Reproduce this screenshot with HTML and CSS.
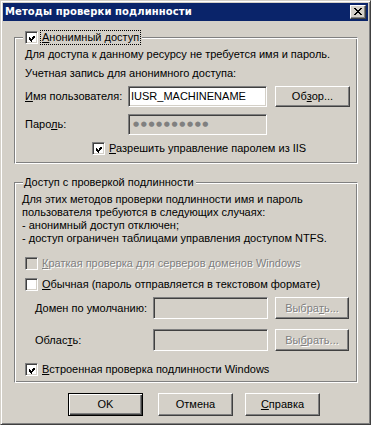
FILE: index.html
```html
<!DOCTYPE html>
<html lang="ru">
<head>
<meta charset="utf-8">
<title>Методы проверки подлинности</title>
<link rel="stylesheet" href="styles.css">
</head>
<body>
<div class="window">
  <div class="titlebar">
    <span class="title">Методы проверки подлинности</span>
    <span class="close-btn"><svg width="8" height="7" viewBox="0 0 8 7" shape-rendering="crispEdges"><path d="M0 0h2v1H0zM6 0h2v1H6zM1 1h2v1H1zM5 1h2v1H5zM2 2h4v1H2zM3 3h2v1H3zM2 4h4v1H2zM1 5h2v1H1zM5 5h2v1H5zM0 6h2v1H0zM6 6h2v1H6z" fill="#000"/></svg></span>
  </div>
  <div class="content">
    <div class="group group-anon">
      <div class="legend">
        <span class="cb"><svg class="tick" width="7" height="7" viewBox="0 0 7 7" shape-rendering="crispEdges"><path d="M6 0H7V3H6V4H5V5H4V6H3V7H2V6H1V5H0V2H1V3H2V4H3V3H4V2H5V1H6Z" fill="#000"/></svg></span>
        <span class="focus-label"><u>А</u>нонимный доступ</span>
      </div>
      <p class="text t1">Для доступа к данному ресурсу не требуется имя и пароль.</p>
      <p class="text t2">Учетная запись для анонимного доступа:</p>
      <div class="row row-user">
        <span class="lbl lbl-a"><u>И</u>мя пользователя:</span>
        <span class="field field-a">IUSR_MACHINENAME</span>
        <span class="btn btn-side">Об<u>з</u>ор...</span>
      </div>
      <div class="row row-pass">
        <span class="lbl lbl-a">Паро<u>л</u>ь:</span>
        <span class="field field-a field-disabled"><span class="dots">●●●●●●●●●●</span></span>
      </div>
      <div class="check-row check-iis">
        <span class="cb"><svg class="tick" width="7" height="7" viewBox="0 0 7 7" shape-rendering="crispEdges"><path d="M6 0H7V3H6V4H5V5H4V6H3V7H2V6H1V5H0V2H1V3H2V4H3V3H4V2H5V1H6Z" fill="#000"/></svg></span>
        <span class="cb-label"><u>Р</u>азрешить управление паролем из IIS</span>
      </div>
    </div>

    <div class="group group-auth">
      <div class="legend legend-text">Доступ с проверкой подлинности</div>
      <p class="text para">Для этих методов проверки подлинности имя и пароль<br>пользователя требуются в следующих случаях:<br>- анонимный доступ отключен;<br>- доступ ограничен таблицами управления доступом NTFS.</p>
      <div class="check-row check-digest">
        <span class="cb cb-disabled"></span>
        <span class="cb-label disabled"><u>К</u>раткая проверка для серверов доменов Windows</span>
      </div>
      <div class="check-row check-basic">
        <span class="cb"></span>
        <span class="cb-label"><u>О</u>бычная (пароль отправляется в текстовом формате)</span>
      </div>
      <div class="row row-domain">
        <span class="lbl lbl-b">Домен по умолчанию:</span>
        <span class="field field-b field-disabled"></span>
        <span class="btn btn-side btn-b disabled">Выбра<u>т</u>ь...</span>
      </div>
      <div class="row row-realm">
        <span class="lbl lbl-b">Облас<u>т</u>ь:</span>
        <span class="field field-b field-disabled"></span>
        <span class="btn btn-side btn-b disabled">Вы<u>б</u>рать...</span>
      </div>
      <div class="check-row check-win">
        <span class="cb"><svg class="tick" width="7" height="7" viewBox="0 0 7 7" shape-rendering="crispEdges"><path d="M6 0H7V3H6V4H5V5H4V6H3V7H2V6H1V5H0V2H1V3H2V4H3V3H4V2H5V1H6Z" fill="#000"/></svg></span>
        <span class="cb-label"><u>В</u>строенная проверка подлинности Windows</span>
      </div>
    </div>

    <div class="buttons">
      <span class="btn btn-main btn-default">OK</span>
      <span class="btn btn-main btn-cancel">Отмена</span>
      <span class="btn btn-main btn-help"><u>С</u>правка</span>
    </div>
  </div>
</div>
</body>
</html>
```

FILE: styles.css
```css
html, body {
  margin: 0;
  padding: 0;
  background: #d4d0c8;
}

body {
  font-family: "Liberation Sans", Arial, sans-serif;
  font-size: 11px;
  line-height: 13px;
  color: #000;
}

u {
  text-decoration: underline;
  text-underline-offset: 1px;
}

.window {
  width: 371px;
  height: 425px;
  box-sizing: border-box;
  border: 1px solid;
  border-color: #d4d0c8 #404040 #404040 #d4d0c8;
  box-shadow: inset 1px 1px #fff, inset -1px -1px #808080;
  padding: 2px;
  background: #d4d0c8;
  display: flex;
  flex-direction: column;
}

.titlebar {
  height: 18px;
  flex: none;
  background: #0a246a;
  color: #fff;
  display: flex;
  align-items: center;
  justify-content: space-between;
  padding: 0 2px;
}

.title {
  font-family: "DejaVu Sans", sans-serif;
  font-weight: bold;
  font-size: 10px;
  line-height: 18px;
  white-space: nowrap;
  letter-spacing: 0.1px;
}

.close-btn {
  width: 16px;
  height: 14px;
  box-sizing: border-box;
  background: #d4d0c8;
  border: 1px solid;
  border-color: #fff #404040 #404040 #fff;
  box-shadow: inset -1px -1px #808080;
  display: flex;
  align-items: center;
  justify-content: center;
  padding: 0 0 1px 0;
}

.close-btn svg {
  display: block;
}

.content {
  display: flex;
  flex-direction: column;
  align-items: flex-start;
  padding: 16px 10px 0 11px;
}

.group {
  width: 344px;
  box-sizing: border-box;
  border: 1px solid;
  border-color: #808080 #fff #fff #808080;
  box-shadow: inset 1px 1px #fff, inset -1px -1px #808080;
  display: flex;
  flex-direction: column;
  align-items: flex-start;
  padding: 0 6px 8px 10px;
}

.group-auth {
  margin-top: 18px;
  padding-bottom: 6px;
}

.legend {
  margin-top: -7px;
  margin-left: -2px;
  padding: 0 2px;
  height: 13px;
  background: #d4d0c8;
  display: flex;
  align-items: center;
  white-space: nowrap;
}

.legend-text {
  line-height: 13px;
  padding: 0 2px 0 1px;
  margin-left: -2px;
}

.focus-label {
  margin-left: 3px;
  padding: 0 1px;
  line-height: 13px;
  outline: 1px dotted #000;
  outline-offset: 0;
}

.text {
  margin: 0;
  white-space: nowrap;
}

.t1 { margin-top: 4px; }
.t2 { margin-top: 6px; }

.para {
  margin-top: 4px;
  margin-left: -3px;
}

.row {
  display: flex;
  align-items: center;
  white-space: nowrap;
}

.row-user { margin-top: 6px; height: 21px; }
.row-pass { margin-top: 7px; height: 21px; }

.row-domain { margin-top: 6px; margin-left: 10px; height: 22px; }
.row-realm { margin-top: 10px; margin-left: 10px; height: 22px; }

.lbl-a { width: 103px; }
.lbl-b { width: 118px; }

.field {
  box-sizing: border-box;
  height: 100%;
  border: 1px solid;
  border-color: #808080 #fff #fff #808080;
  box-shadow: inset 1px 1px #404040, inset -1px -1px #d4d0c8;
  background: #fff;
  padding: 0 2px 0 2px;
  display: flex;
  align-items: center;
}

.field-a { width: 139px; }
.field-b { width: 115px; }

.field-disabled {
  background: #d4d0c8;
}

.dots {
  font-family: "DejaVu Sans", sans-serif;
  font-size: 7px;
  color: #808080;
  letter-spacing: 1.6px;
  padding-left: 2px;
}

.btn {
  box-sizing: border-box;
  width: 75px;
  border: 1px solid;
  border-color: #fff #404040 #404040 #fff;
  box-shadow: inset -1px -1px #808080;
  background: #d4d0c8;
  display: flex;
  align-items: center;
  justify-content: center;
  white-space: nowrap;
}

.btn-side {
  margin-left: 8px;
  height: 21px;
}

.btn-b {
  margin-left: 7px;
  width: 74px;
  height: 22px;
}

.disabled {
  color: #808080;
  text-shadow: 1px 1px 0 #fff;
}

.check-row {
  display: flex;
  align-items: center;
  height: 13px;
  white-space: nowrap;
}

.check-iis { margin-top: 7px; margin-left: 67px; }
.check-digest { margin-top: 12px; }
.check-basic { margin-top: 8px; }
.check-win { margin-top: 12px; }

.cb {
  flex: none;
  width: 13px;
  height: 13px;
  box-sizing: border-box;
  border: 1px solid;
  border-color: #808080 #fff #fff #808080;
  box-shadow: inset 1px 1px #404040, inset -1px -1px #d4d0c8;
  background: #fff;
  padding: 2px;
  display: flex;
}

.cb-disabled {
  background: #d4d0c8;
}

.tick {
  display: block;
  margin: 1px 0 0 1px;
}

.cb-label {
  margin-left: 4px;
  line-height: 13px;
}

.buttons {
  display: flex;
  margin-top: 10px;
  margin-left: 54px;
}

.btn-main {
  height: 23px;
}

.btn-default {
  border-color: #000;
  box-shadow: inset 1px 1px #fff, inset -1px -1px #404040, inset -2px -2px #808080;
}

.btn-cancel { margin-left: 15px; }
.btn-help { margin-left: 12px; }
```
